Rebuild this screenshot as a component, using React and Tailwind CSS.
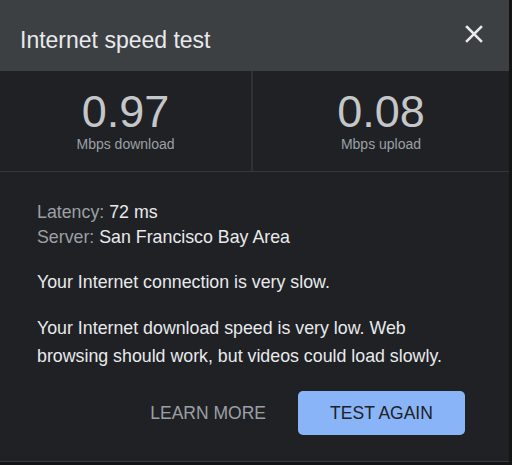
import React from 'react';

function CloseIcon() {
  return (
    <svg width="18" height="18" viewBox="0 0 18 18" fill="none" stroke="#e8eaed" strokeWidth="2.6" strokeLinecap="square">
      <path d="M2 2 16 16" />
      <path d="M16 2 2 16" />
    </svg>
  );
}

function Stat({ value, label, divider }) {
  return (
    <div className={`flex flex-col items-center pt-[21px] ${divider ? 'w-[253px] border-r-2 border-[#2f3134]' : 'flex-1'}`}>
      <div className="text-[45px] leading-[40px] text-[#c4c7c9]">{value}</div>
      <div className="mt-[4px] text-[14px] leading-[16px] text-[#9aa0a6]">{label}</div>
    </div>
  );
}

export default function App() {
  return (
    <div className="w-[512px] h-[465px] bg-[#141414]" style={{ fontFamily: '"Liberation Sans", Arial, sans-serif' }}>
      <div className="w-[509px] h-[462px] bg-[#202124] border-b border-[#3a3b3e] flex flex-col">
        <div className="h-[71px] shrink-0 bg-[#3c4043] flex items-start justify-between pl-5 pr-[26px]">
          <h1 className="pt-[29px] text-[23px] leading-none text-[#e8eaed]">Internet speed test</h1>
          <button type="button" className="mt-[25px]">
            <CloseIcon />
          </button>
        </div>

        <div className="h-[101px] shrink-0 flex border-b border-[#35373a]">
          <Stat value="0.97" label="Mbps download" divider />
          <Stat value="0.08" label="Mbps upload" />
        </div>

        <div className="pl-[37px] pr-[44px] pt-[28px] text-[17.8px] text-[#e8eaed]">
          <div className="leading-[25px]">
            <div><span className="text-[#9aa0a6]">Latency:</span> 72 ms</div>
            <div><span className="text-[#9aa0a6]">Server:</span> San Francisco Bay Area</div>
          </div>
          <p className="mt-5 leading-[25px]">Your Internet connection is very slow.</p>
          <p className="mt-[19px] leading-[28px]">
            Your Internet download speed is very low. Web
            <br />
            browsing should work, but videos could load slowly.
          </p>
          <div className="mt-[21px] flex items-center justify-end">
            <button type="button" className="mr-8 text-[17.5px] text-[#9aa0a6]">LEARN MORE</button>
            <button type="button" className="w-[167px] h-[44px] rounded-[5px] bg-[#8ab4f8] text-[17.5px] text-[#202124]">
              TEST AGAIN
            </button>
          </div>
        </div>
      </div>
    </div>
  );
}
